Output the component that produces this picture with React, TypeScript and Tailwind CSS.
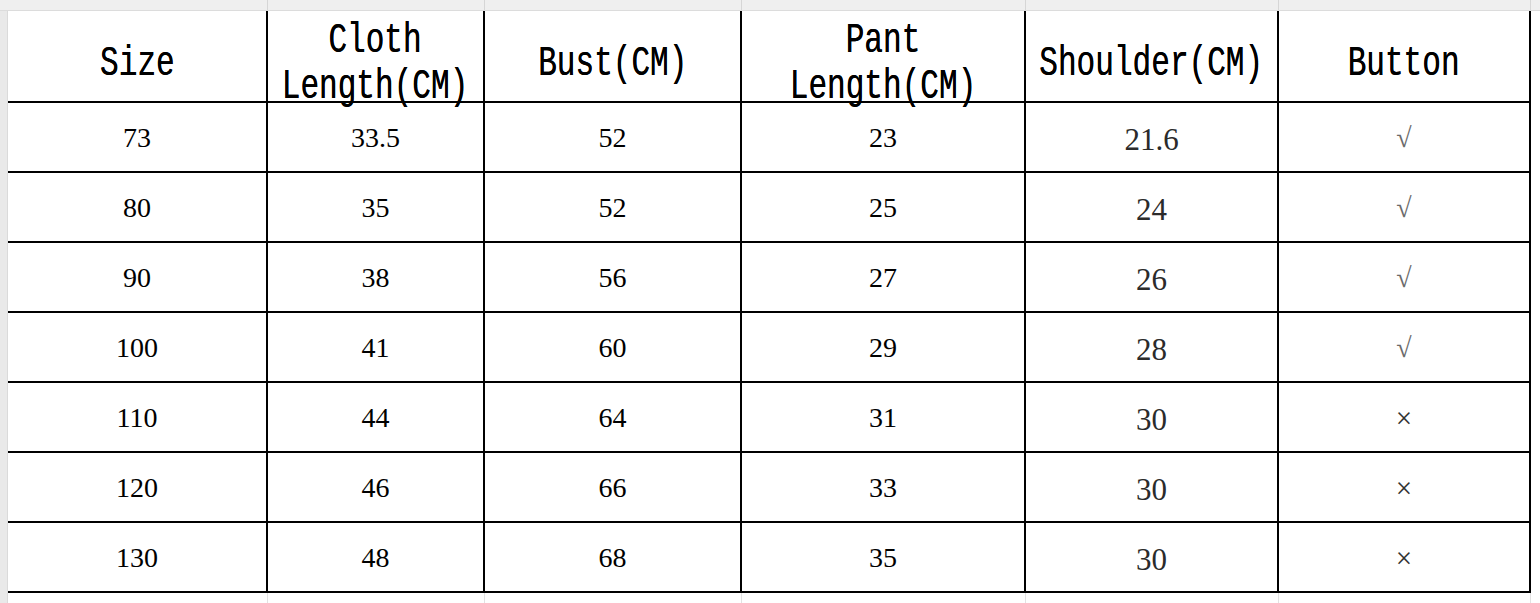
import React from "react";

const COLS = [260, 217, 257, 284, 253, 252];

const HEADERS: string[][] = [
  ["Size"],
  ["Cloth", "Length(CM)"],
  ["Bust(CM)"],
  ["Pant", "Length(CM)"],
  ["Shoulder(CM)"],
  ["Button"],
];

const ROWS: string[][] = [
  ["73", "33.5", "52", "23", "21.6", "√"],
  ["80", "35", "52", "25", "24", "√"],
  ["90", "38", "56", "27", "26", "√"],
  ["100", "41", "60", "29", "28", "√"],
  ["110", "44", "64", "31", "30", "×"],
  ["120", "46", "66", "33", "30", "×"],
  ["130", "48", "68", "35", "30", "×"],
];

const gridCols = "grid grid-cols-[260px_217px_257px_284px_253px_252px]";

function HeaderCell({ lines }: { lines: string[] }) {
  return (
    <div className="h-[92px] border-r-2 border-b-2 border-black flex items-center justify-center pt-[16px]">
      <span className="inline-block scale-x-[0.74] text-center whitespace-nowrap font-['Liberation_Mono',monospace] text-[42px] leading-[46px] text-black [text-shadow:0_0_0.4px_#000]">
        {lines.map((l) => (
          <span key={l} className="block">
            {l}
          </span>
        ))}
      </span>
    </div>
  );
}

function BodyCell({ value, col }: { value: string; col: number }) {
  let cls = "text-[28px] text-black";
  if (col === 4) cls = "text-[31px] text-[#2b2b2b] pt-[3px]";
  if (col === 5) cls = value === "√" ? "text-[28px] text-[#6a6a6a]" : "text-[29px] text-[#333]";
  return (
    <div className="h-[70px] border-r-2 border-b-2 border-black flex items-center justify-center pt-[2px]">
      <span className={`font-['Liberation_Serif',serif] leading-none ${cls}`}>{value}</span>
    </div>
  );
}

export default function App() {
  return (
    <div className="w-[1540px] h-[603px] overflow-hidden bg-white">
      {/* spreadsheet column header strip */}
      <div className="flex h-[11px] bg-[#efefef] border-b border-[#dcdcdc]">
        <div className="w-[8px] shrink-0" />
        <div className={gridCols}>
          {COLS.map((w, i) => (
            <div key={i} className="h-[10px] border-r border-[#d6d6d6]" />
          ))}
        </div>
      </div>

      <div className="flex">
        {/* row header gutter */}
        <div className="w-[8px] shrink-0 bg-[#e9e9e9] border-r border-[#dadada] h-[592px]" />

        <div className="flex flex-col">
          <div className={gridCols}>
            {HEADERS.map((h, i) => (
              <HeaderCell key={i} lines={h} />
            ))}
            {ROWS.map((row, r) =>
              row.map((v, c) => <BodyCell key={`${r}-${c}`} value={v} col={c} />)
            )}
          </div>
          {/* empty spreadsheet row below */}
          <div className={gridCols}>
            {COLS.map((w, i) => (
              <div key={i} className="h-[20px] border-r border-[#e2e2e2]" />
            ))}
          </div>
        </div>
      </div>
    </div>
  );
}
